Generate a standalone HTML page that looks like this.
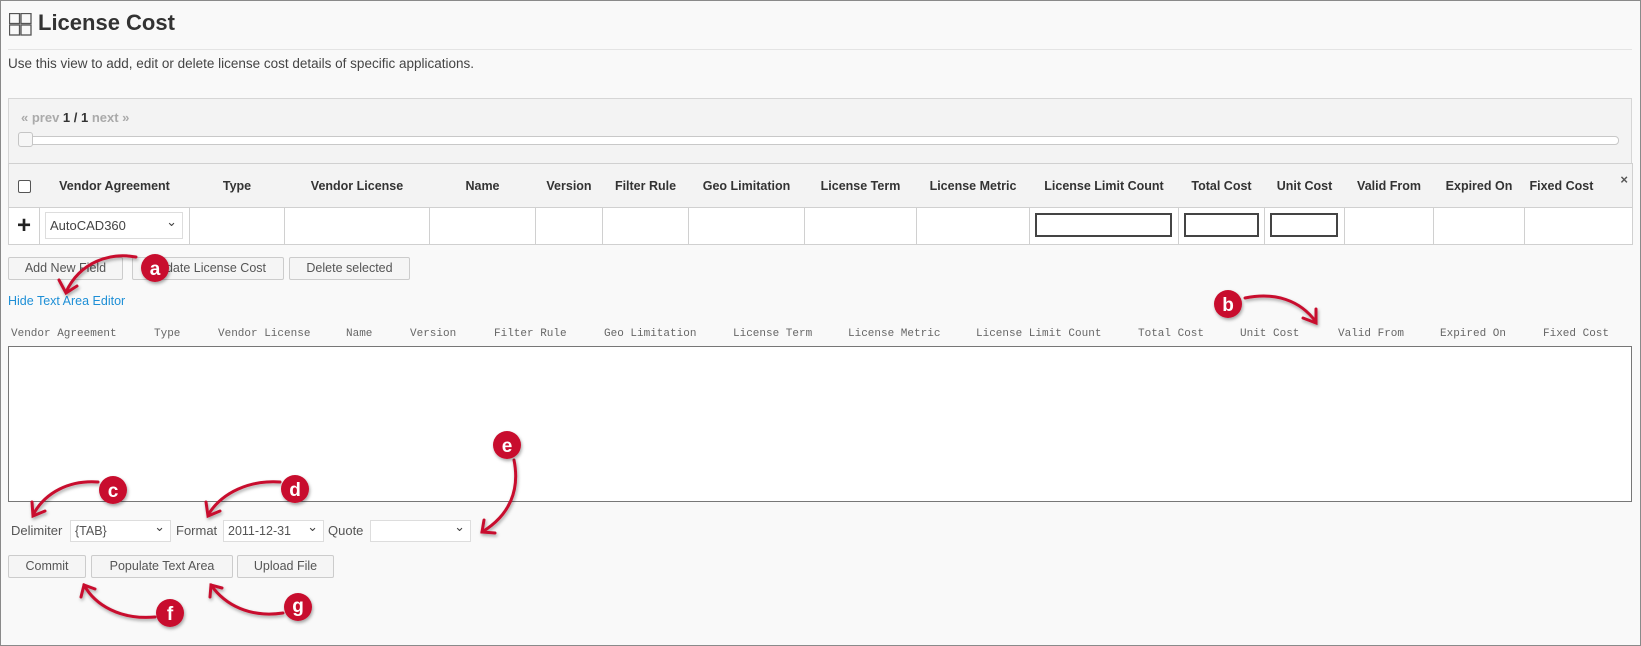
<!DOCTYPE html>
<html><head><meta charset="utf-8">
<style>
*{box-sizing:border-box;margin:0;padding:0}
body{width:1641px;height:646px;background:#fff;font-family:"Liberation Sans",sans-serif;color:#333;position:relative;overflow:hidden}
#page{position:absolute;left:0;top:0;width:1641px;height:646px;background:#f9f9f9;border:1px solid #8a8a8a}
.abs{position:absolute}
h1{position:absolute;left:37px;top:9px;font-size:22px;font-weight:bold;color:#333}
.hr{position:absolute;left:7px;top:48px;width:1624px;height:1px;background:#e4e4e4}
.desc{position:absolute;left:7px;top:55px;font-size:13.5px;color:#444}
.pager{position:absolute;left:7px;top:97px;width:1624px;height:66px;background:#f3f3f3;border:1px solid #d6d6d6;border-bottom:none}
.pg{position:absolute;left:12px;top:11px;font-size:13px;font-weight:bold;color:#aaa}
.pg b{color:#333}
.slider{position:absolute;left:10px;top:37px;width:1600px;height:9px;background:#fff;border:1px solid #c8c8c8;border-radius:4px}
.handle{position:absolute;left:9px;top:33px;width:15px;height:15px;background:#f6f6f6;border:1px solid #c5c5c5;border-radius:3px}
table{position:absolute;left:7px;top:162px;border-collapse:collapse;table-layout:fixed;width:1624px}
th{height:44px;background:#f3f3f3;border-top:1px solid #d0d0d0;border-bottom:1px solid #d0d0d0;font-size:12.5px;font-weight:bold;color:#333;white-space:nowrap;text-align:center}
td{height:37px;background:#fff;border:1px solid #d0d0d0;position:relative}
.btn{position:absolute;height:23px;border:1px solid #ccc;border-radius:2px;background:#f5f5f5;font-size:12.5px;color:#555;text-align:center;line-height:21px}
.mono{position:absolute;top:327px;font-family:"Liberation Mono",monospace;font-size:11px;color:#666;white-space:nowrap}
.ta{position:absolute;left:7px;top:345px;width:1624px;height:156px;background:#fff;border:1px solid #777}
.sel{position:absolute;height:22px;background:#fff;border:1px solid #ddd;font-size:12.5px;color:#555;line-height:20px;padding-left:4px}
.sel:after{content:"⌄";position:absolute;right:5px;top:-4px;font-size:13px;color:#444}
.lbl{position:absolute;top:522px;font-size:13px;color:#555}
.inp{position:absolute;top:5px;height:24px;border:2px solid #444;background:#fff}
</style></head><body>
<div id="page">
<svg class="abs" style="left:8px;top:12px" width="23" height="23" viewBox="0 0 23 23"><rect x="0.5" y="0.5" width="10" height="10" fill="none" stroke="#555" stroke-width="1.3"/><rect x="12" y="0.5" width="10" height="10" fill="none" stroke="#555" stroke-width="1.3"/><rect x="0.5" y="12" width="10" height="10" fill="none" stroke="#555" stroke-width="1.3"/><rect x="12" y="12" width="10" height="10" fill="none" stroke="#555" stroke-width="1.3"/></svg>
<h1>License Cost</h1>
<div class="hr"></div>
<div class="desc">Use this view to add, edit or delete license cost details of specific applications.</div>
<div class="pager"><div class="pg">« prev <b>1 / 1</b> next »</div><div class="slider"></div><div class="handle"></div></div>
<table>
<colgroup><col style="width:31px"><col style="width:150px"><col style="width:95px"><col style="width:145px"><col style="width:106px"><col style="width:67px"><col style="width:86px"><col style="width:116px"><col style="width:112px"><col style="width:113px"><col style="width:149px"><col style="width:86px"><col style="width:80px"><col style="width:89px"><col style="width:91px"><col style="width:108px"></colgroup>
<tr style="border-left:1px solid #d0d0d0;border-right:1px solid #d0d0d0"><th><span style="display:inline-block;width:13px;height:13px;border:1px solid #555;border-radius:2px;background:#fff;vertical-align:middle"></span></th><th>Vendor Agreement</th><th>Type</th><th>Vendor License</th><th>Name</th><th>Version</th><th>Filter Rule</th><th>Geo Limitation</th><th>License Term</th><th>License Metric</th><th>License Limit Count</th><th>Total Cost</th><th>Unit Cost</th><th>Valid From</th><th>Expired On</th><th style="position:relative;text-align:left;padding-left:5px">Fixed Cost <span style="position:absolute;right:4px;top:8px;font-size:13px;color:#555">×</span></th></tr>
<tr><td style="text-align:center;font-size:24px;font-weight:bold;color:#222">+</td><td><div class="sel" style="left:5px;top:4px;width:138px;height:27px;line-height:25px;color:#444;font-size:13px">AutoCAD360</div></td><td></td><td></td><td></td><td></td><td></td><td></td><td></td><td></td><td><div class="inp" style="left:5px;width:137px"></div></td><td><div class="inp" style="left:5px;width:75px"></div></td><td><div class="inp" style="left:5px;width:68px"></div></td><td></td><td></td><td></td></tr>
</table>
<div class="btn" style="left:7px;top:256px;width:115px">Add New Field</div>
<div class="btn" style="left:131px;top:256px;width:152px">Update License Cost</div>
<div class="btn" style="left:288px;top:256px;width:121px">Delete selected</div>
<div class="abs" style="left:7px;top:293px;font-size:12.5px;color:#1e8fd6">Hide Text Area Editor</div>
<div class="mono" style="left:10px">Vendor Agreement</div><div class="mono" style="left:153px">Type</div><div class="mono" style="left:217px">Vendor License</div><div class="mono" style="left:345px">Name</div><div class="mono" style="left:409px">Version</div><div class="mono" style="left:493px">Filter Rule</div><div class="mono" style="left:603px">Geo Limitation</div><div class="mono" style="left:732px">License Term</div><div class="mono" style="left:847px">License Metric</div><div class="mono" style="left:975px">License Limit Count</div><div class="mono" style="left:1137px">Total Cost</div><div class="mono" style="left:1239px">Unit Cost</div><div class="mono" style="left:1337px">Valid From</div><div class="mono" style="left:1439px">Expired On</div><div class="mono" style="left:1542px">Fixed Cost</div>
<div class="ta"></div>
<div class="lbl" style="left:10px">Delimiter</div>
<div class="sel" style="left:69px;top:519px;width:101px">{TAB}</div>
<div class="lbl" style="left:175px">Format</div>
<div class="sel" style="left:222px;top:519px;width:101px">2011-12-31</div>
<div class="lbl" style="left:327px">Quote</div>
<div class="sel" style="left:369px;top:519px;width:101px"></div>
<div class="btn" style="left:7px;top:554px;width:78px">Commit</div>
<div class="btn" style="left:90px;top:554px;width:142px">Populate Text Area</div>
<div class="btn" style="left:236px;top:554px;width:97px">Upload File</div>
</div>
<svg class="abs" style="left:0;top:0" width="1641" height="646" viewBox="0 0 1641 646">
<defs><filter id="sh"><feDropShadow dx="1" dy="2" stdDeviation="1.5" flood-opacity="0.35"/></filter></defs>
<g fill="none" stroke="#c8102e" stroke-width="3" stroke-linecap="round" filter="url(#sh)">
<path d="M136 257 C110 252 80 262 66 292"/><path d="M59 280 L66 293 L77 286"/>
<path d="M1245 298 C1275 292 1300 300 1316 322"/><path d="M1303 318 L1316 323 L1316 309"/>
<path d="M98 482 C70 480 45 492 33 515"/><path d="M32 502 L33 516 L45 511"/>
<path d="M280 482 C250 480 222 492 208 515"/><path d="M206 502 L208 516 L220 511"/>
<path d="M514 460 C520 490 510 515 482 532"/><path d="M484 520 L482 532 L495 533"/>
<path d="M155 617 C120 620 95 605 84 585"/><path d="M81 597 L84 585 L95 589"/>
<path d="M283 613 C250 618 225 605 211 585"/><path d="M210 597 L211 585 L222 588"/>
</g>
<g filter="url(#sh)" fill="#c8102e">
<circle cx="155" cy="268" r="14"/><circle cx="1228" cy="304" r="14"/><circle cx="113" cy="490" r="14"/><circle cx="295" cy="489" r="14"/><circle cx="507" cy="445" r="14"/><circle cx="170" cy="613" r="14"/><circle cx="298" cy="607" r="14"/>
</g>
<g fill="#fff" font-family="Liberation Sans,sans-serif" font-weight="bold" font-size="19" text-anchor="middle">
<text x="155" y="275">a</text><text x="1228" y="311">b</text><text x="113" y="497">c</text><text x="295" y="496">d</text><text x="507" y="452">e</text><text x="170" y="620">f</text><text x="298" y="612">g</text>
</g>
</svg>
</body></html>
